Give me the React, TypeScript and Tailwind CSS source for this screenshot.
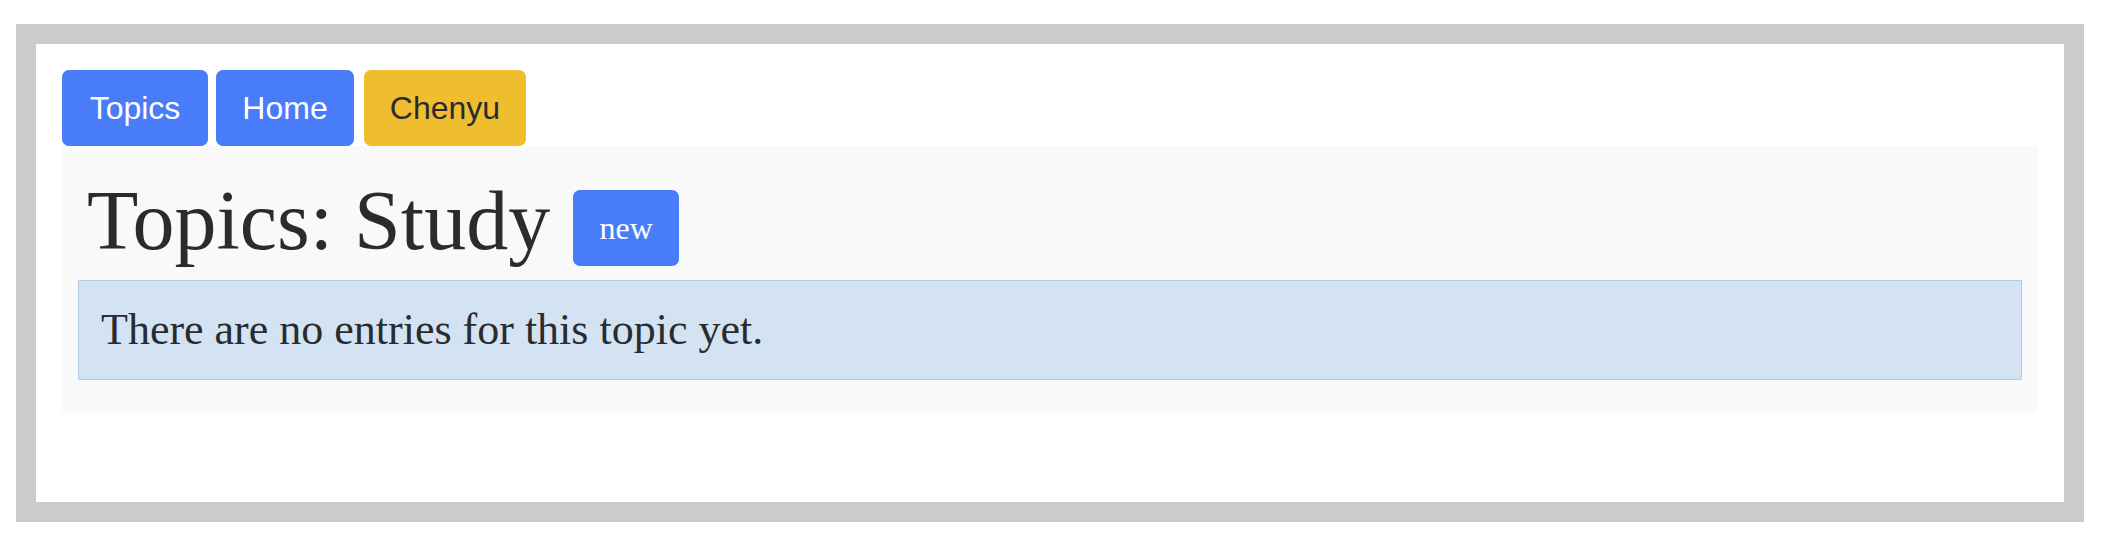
import React from "react";

const navButtons = [
    {label: "Topics", className: "w-[146px] bg-[#487cf9] text-white"},
    {label: "Home", className: "ml-[8px] w-[138px] bg-[#487cf9] text-white"},
    {label: "Chenyu", className: "ml-[10px] w-[162px] bg-[#efbe2f] text-[#2a2b2f]"},
];

const App: React.FC = () => {
    return (
        <div className="min-h-[550px] bg-white pt-[24px] pl-[16px]">
            <div className="w-[2068px] h-[498px] border-[20px] border-[#cbcbcb] bg-white p-[26px]">
                <nav className="flex font-['Liberation_Sans',Arial,sans-serif]">
                    {navButtons.map((b) => (
                        <a
                            key={b.label}
                            href="#"
                            className={`flex justify-center rounded-[7px] py-[14px] text-[32px] leading-[48px] ${b.className}`}>
                            {b.label}
                        </a>
                    ))}
                </nav>
                <div className="bg-[#f9f9f9] px-[16px] pt-[33px] pb-[32px] font-['Liberation_Serif','Times_New_Roman',serif] text-[#2a2b2f]">
                    <div className="flex items-start">
                        <h1 className="ml-[9px] text-[84px] leading-[84px] font-normal">
                            Topics: Study
                        </h1>
                        <a
                            href="#"
                            className="ml-[23px] mt-[11px] flex w-[106px] justify-center rounded-[7px] bg-[#487cf9] text-[32px] leading-[76px] text-white">
                            new
                        </a>
                    </div>
                    <div className="mt-[14px] flex h-[100px] items-center border border-[#b3cae3] bg-[#d4e3f3] px-[22px] text-[44px]">
                        There are no entries for this topic yet.
                    </div>
                </div>
            </div>
        </div>
    );
};

export default App;
